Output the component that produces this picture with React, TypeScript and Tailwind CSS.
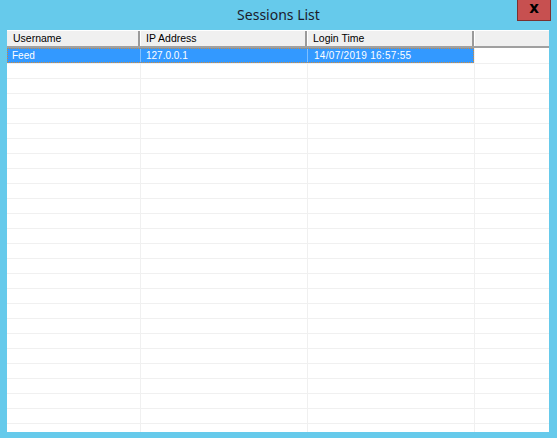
import React from "react";

const rows = Array.from({ length: 26 }, (_, i) => i);

export default function App() {
  return (
    <div
      className="w-[557px] h-[438px] bg-[#66caeb] flex flex-col overflow-hidden"
      style={{ fontFamily: '"Liberation Sans", Arial, sans-serif' }}
    >
      <div className="relative h-[30px] flex items-center justify-center">
        <span
          className="text-[14px] text-[#1b1b2b] leading-none"
          style={{ fontFamily: '"Noto Sans", "Open Sans", sans-serif' }}
        >
          Sessions List
        </span>
        <div className="absolute left-[517px] top-0 w-[34px] h-[21px] bg-[#c75050] border-x border-b border-[#7a3030] flex items-center justify-center">
          <span
            className="text-[15px] font-bold text-black leading-none -mt-[3px]"
            style={{ fontFamily: '"DejaVu Sans", sans-serif' }}
          >
            x
          </span>
        </div>
      </div>
      <div className="ml-[7px] mr-[8px] h-[402px] bg-white overflow-hidden flex flex-col">
        <div className="flex h-[18px] shrink-0 bg-[#f0f0f0] border-t border-white border-b-2 border-b-[#a0a0a0] text-[10.5px] text-black">
          <div className="w-[133px] pl-[6px] flex items-center border-r-2 border-[#9a9a9a]">Username</div>
          <div className="w-[167px] pl-[5px] flex items-center border-l border-white border-r-2 border-r-[#9a9a9a]">IP Address</div>
          <div className="w-[167px] pl-[5px] flex items-center border-l border-white border-r-2 border-r-[#9a9a9a]">Login Time</div>
          <div className="flex-1 border-l border-white"></div>
        </div>
        <div className="flex flex-col">
          {rows.map((i) =>
            i === 0 ? (
              <div key={i} className="flex h-[16px] shrink-0 border-b border-[#f0f0f0]">
                <div className="flex w-[467px] bg-[#3399ff] border border-dotted border-[#d08a3a] text-white text-[10px]">
                  <div className="w-[132px] pl-[4px] flex items-center">Feed</div>
                  <div className="w-[167px] pl-[5px] flex items-center border-l border-[#7fbfff]">127.0.0.1</div>
                  <div className="w-[166px] pl-[6px] flex items-center border-l border-[#7fbfff] tracking-[0.3px]">14/07/2019 16:57:55</div>
                </div>
                <div className="flex-1 border-l border-[#f0f0f0]"></div>
              </div>
            ) : (
              <div key={i} className="flex h-[15px] shrink-0 border-b border-[#f0f0f0]">
                <div className="w-[133px]"></div>
                <div className="w-[167px] border-l border-[#f0f0f0]"></div>
                <div className="w-[167px] border-l border-[#f0f0f0]"></div>
                <div className="flex-1 border-l border-[#f0f0f0]"></div>
              </div>
            )
          )}
        </div>
      </div>
    </div>
  );
}
